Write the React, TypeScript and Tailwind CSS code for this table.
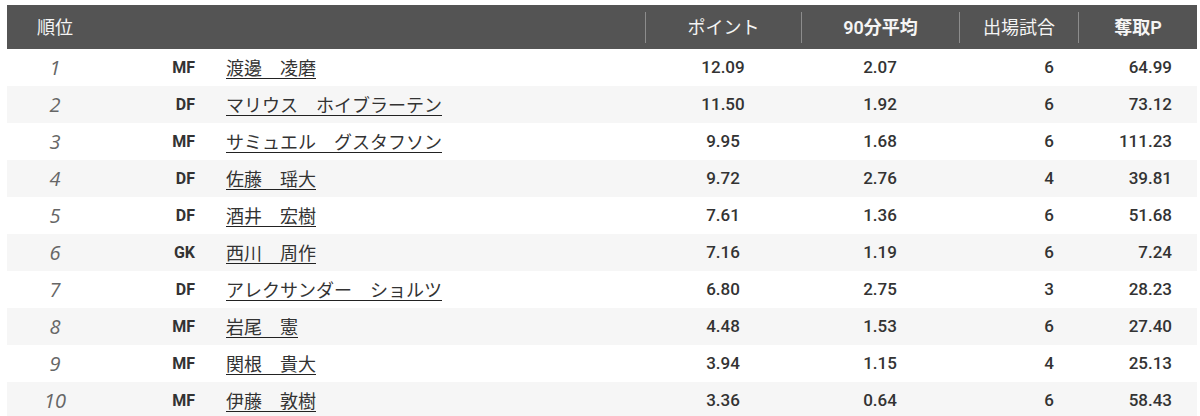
const rows = [
  { rank: 1, pos: "MF", name: "渡邊　凌磨", pt: "12.09", avg: "2.07", games: 6, steal: "64.99" },
  { rank: 2, pos: "DF", name: "マリウス　ホイブラーテン", pt: "11.50", avg: "1.92", games: 6, steal: "73.12" },
  { rank: 3, pos: "MF", name: "サミュエル　グスタフソン", pt: "9.95", avg: "1.68", games: 6, steal: "111.23" },
  { rank: 4, pos: "DF", name: "佐藤　瑶大", pt: "9.72", avg: "2.76", games: 4, steal: "39.81" },
  { rank: 5, pos: "DF", name: "酒井　宏樹", pt: "7.61", avg: "1.36", games: 6, steal: "51.68" },
  { rank: 6, pos: "GK", name: "西川　周作", pt: "7.16", avg: "1.19", games: 6, steal: "7.24" },
  { rank: 7, pos: "DF", name: "アレクサンダー　ショルツ", pt: "6.80", avg: "2.75", games: 3, steal: "28.23" },
  { rank: 8, pos: "MF", name: "岩尾　憲", pt: "4.48", avg: "1.53", games: 6, steal: "27.40" },
  { rank: 9, pos: "MF", name: "関根　貴大", pt: "3.94", avg: "1.15", games: 4, steal: "25.13" },
  { rank: 10, pos: "MF", name: "伊藤　敦樹", pt: "3.36", avg: "0.64", games: 6, steal: "58.43" },
];

const jp = "font-['Roboto','Noto_Sans_CJK_JP',sans-serif]";

function HeadCell({ label, bold }: { label: string; bold?: boolean }) {
  return (
    <th className="p-0 pt-[7px] pb-[6px] align-top">
      <div
        className={`h-[31px] border-l border-[#8c8c8c] flex items-center justify-center text-[18px] ${
          bold ? "font-semibold" : "font-normal"
        }`}
      >
        {label}
      </div>
    </th>
  );
}

export default function App() {
  return (
    <div className="bg-white w-[1200px] h-[416px] overflow-hidden pl-[7px] pt-[5px]">
      <table className={`w-[1190px] table-fixed border-collapse ${jp}`}>
        <colgroup>
          <col className="w-[96px]" />
          <col className="w-[107px]" />
          <col className="w-[435px]" />
          <col className="w-[156px]" />
          <col className="w-[158px]" />
          <col className="w-[119px]" />
          <col className="w-[119px]" />
        </colgroup>
        <thead>
          <tr className="bg-[#545454] text-[#f5f5f5] h-[44px]">
            <th className="p-0 text-center text-[18px] font-normal">順位</th>
            <th className="p-0" />
            <th className="p-0" />
            <HeadCell label="ポイント" />
            <HeadCell label="90分平均" bold />
            <HeadCell label="出場試合" />
            <HeadCell label="奪取P" bold />
          </tr>
        </thead>
        <tbody>
          {rows.map((r, i) => (
            <tr key={r.rank} className={`h-[37px] ${i % 2 === 1 ? "bg-[#f6f6f6]" : "bg-white"}`}>
              <td className="p-0 text-center italic text-[20px] font-medium text-[#666] font-['Open_Sans',sans-serif]">
                {r.rank}
              </td>
              <td className="p-0 pr-[15px] text-right text-[16px] font-bold text-[#333] font-['Roboto',sans-serif]">
                {r.pos}
              </td>
              <td className="p-0 pl-[16px] text-left">
                <a className="text-[18px] text-[#333] underline decoration-[#222] underline-offset-[3px] font-['Noto_Sans_CJK_JP',sans-serif]">
                  {r.name}
                </a>
              </td>
              <td className="p-0 text-center text-[17px] font-medium text-[#333]">{r.pt}</td>
              <td className="p-0 text-center text-[17px] font-medium text-[#333]">{r.avg}</td>
              <td className="p-0 pr-[24px] text-right text-[17px] font-medium text-[#333]">{r.games}</td>
              <td className="p-0 pr-[25px] text-right text-[17px] font-medium text-[#333]">{r.steal}</td>
            </tr>
          ))}
        </tbody>
      </table>
    </div>
  );
}
